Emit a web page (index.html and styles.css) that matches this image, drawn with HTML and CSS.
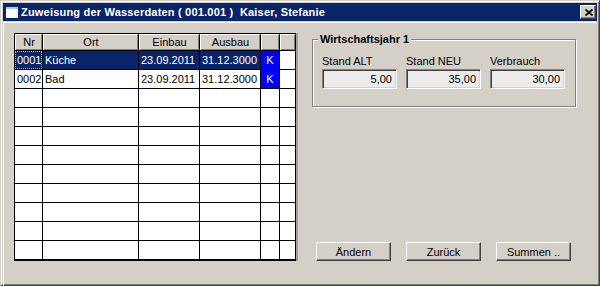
FILE: index.html
```html
<!DOCTYPE html>
<html lang="de">
<head>
  <meta charset="UTF-8" />
  <title>Zuweisung der Wasserdaten</title>
  <link rel="stylesheet" href="styles.css">
</head>
<body>
  <div class="window">
    <div class="titlebar">
      <span class="app-icon"></span>
      <span class="title">Zuweisung der Wasserdaten ( 001.001 )&nbsp;&nbsp;Kaiser, Stefanie</span>
      <button class="close-btn"><svg width="8" height="7" viewBox="0 0 8 7"><path d="M0.5 0.5L7.5 6.5M7.5 0.5L0.5 6.5" stroke="#000" stroke-width="1.7" fill="none"/></svg></button>
    </div>

    <div class="client">
      <div class="grid">
        <div class="hd">Nr</div><div class="hd">Ort</div><div class="hd">Einbau</div><div class="hd">Ausbau</div><div class="hd"></div><div class="hd"></div>

        <div class="sel focus">0001</div><div class="sel">Küche</div><div class="sel">23.09.2011</div><div class="sel">31.12.3000</div><div class="k">K</div><div></div>
        <div>0002</div><div>Bad</div><div>23.09.2011</div><div>31.12.3000</div><div class="k">K</div><div></div>

        <div></div><div></div><div></div><div></div><div></div><div></div>
        <div></div><div></div><div></div><div></div><div></div><div></div>
        <div></div><div></div><div></div><div></div><div></div><div></div>
        <div></div><div></div><div></div><div></div><div></div><div></div>
        <div></div><div></div><div></div><div></div><div></div><div></div>
        <div></div><div></div><div></div><div></div><div></div><div></div>
        <div></div><div></div><div></div><div></div><div></div><div></div>
        <div></div><div></div><div></div><div></div><div></div><div></div>
        <div></div><div></div><div></div><div></div><div></div><div></div>
        <div></div><div></div><div></div><div></div><div></div><div></div>
      </div>

      <div class="side">
        <fieldset class="group">
          <legend>Wirtschaftsjahr 1</legend>
          <div class="fields">
            <label class="field">Stand ALT<input type="text" value="5,00" readonly></label>
            <label class="field">Stand NEU<input type="text" value="35,00" readonly></label>
            <label class="field">Verbrauch<input type="text" value="30,00" readonly></label>
          </div>
        </fieldset>

        <div class="buttons">
          <button class="btn">Ändern</button>
          <button class="btn">Zurück</button>
          <button class="btn">Summen ..</button>
        </div>
      </div>
    </div>
  </div>
</body>
</html>
```

FILE: styles.css
```css
*{margin:0;padding:0;box-sizing:border-box;}
html,body{width:100%;height:100%;overflow:hidden;background:#d4d0c8;font-family:'Liberation Sans',Arial,sans-serif;font-size:11px;color:#000;}

/* window frame */
.window{width:600px;height:286px;display:flex;flex-direction:column;background:#d4d0c8;border:1px solid;border-color:#d4d0c8 #404040 #404040 #d4d0c8;box-shadow:inset 1px 1px #fff,inset -1px -1px #808080;padding:2px;}

.titlebar{height:18px;flex:none;background:#0a246a;color:#fff;display:flex;align-items:center;padding:0 1px 0 3px;}
.app-icon{width:12px;height:11px;background:#fff;border-top:2px solid #a6caf0;margin-right:3px;flex:none;}
.title{font-weight:bold;font-size:11px;letter-spacing:0.2px;white-space:nowrap;flex:1;}
.close-btn{width:16px;height:14px;background:#d4d0c8;border:1px solid;border-color:#fff #404040 #404040 #fff;box-shadow:inset -1px -1px #808080;display:flex;align-items:center;justify-content:center;padding-left:1px;}
.close-btn svg{display:block;}

.client{flex:1;display:flex;margin-top:1px;border-left:1px solid #fff;border-top:1px solid #fff;padding:10px 0 25px 10px;}

/* data grid */
.grid{display:grid;grid-template-columns:27px 95px 60px 60px 18px 15px;grid-template-rows:16px;grid-auto-rows:18px;gap:1px;background:#000;border:1px solid #000;height:228px;overflow:hidden;align-content:start;flex:none;box-shadow:2px 0 #a0a0a0;}
.grid > div{background:#fff;line-height:18px;padding:0 1px 0 2px;white-space:nowrap;overflow:hidden;}
.grid > .hd{background:#d4d0c8;line-height:16px;text-align:center;box-shadow:inset 1px 1px #fff,inset -1px -1px #808080;}
.grid > .sel{background:#0a246a;color:#fff;}
.grid > .k{background:#0000ff;color:#fff;text-align:center;padding:0;}
.grid > .focus{outline:1px dotted #b0b0b0;outline-offset:-1px;}

/* right side */
.side{margin-left:16px;width:264px;display:flex;flex-direction:column;}

.group{border:1px solid #808080;box-shadow:inset 1px 1px #fff,1px 1px #fff;padding:9px 9px 17px 9px;}
.group legend{font-weight:bold;padding:0 2px;margin-left:-4px;background:#d4d0c8;line-height:13px;}

.fields{display:flex;gap:9px;}
.field{width:75px;display:flex;flex-direction:column;gap:1px;line-height:13px;}
.field input{width:75px;height:20px;border:1px solid;border-color:#808080 #fff #fff #808080;box-shadow:inset 1px 1px #404040,inset -1px -1px #d4d0c8;background:#ececec;font:11px 'Liberation Sans',Arial,sans-serif;color:#000;text-align:right;padding:0 4px;outline:none;}

.buttons{margin-top:auto;display:flex;gap:15px;padding-left:4px;}
.btn{width:75px;height:19px;background:#d4d0c8;border:1px solid;border-color:#fff #404040 #404040 #fff;box-shadow:inset -1px -1px #808080;font:11px 'Liberation Sans',Arial,sans-serif;color:#000;}
```
